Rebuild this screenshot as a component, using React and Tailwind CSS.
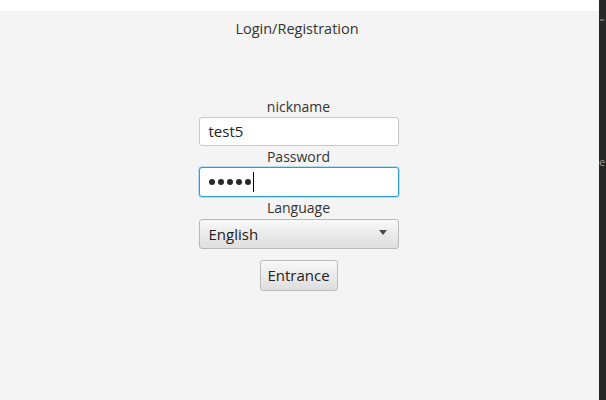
import React from "react";

const LoginWindow = () => {
  return (
    <div className="w-[606px] h-[400px] flex overflow-hidden font-['Open_Sans',sans-serif] text-[#333]">
      <div className="flex-1 flex flex-col">
        {/* window top */}
        <div className="h-[11px] bg-white" />

        <div className="flex-1 bg-[#f4f4f4] pr-[2px] flex flex-col items-center">
          <div className="mt-[7px] mr-[3px] h-[21px] leading-[21px] text-[14.5px] text-[#333]">
            Login/Registration
          </div>

          <div className="mt-[57px] w-[200px] flex flex-col items-center">
            <div className="h-[21px] leading-[21px] text-[14px]">nickname</div>
            <div className="w-full h-[29px] bg-white border border-[#c8c8c8] rounded-[3px] px-[9px] flex items-center text-[15px] text-[#222]">
              test5
            </div>

            <div className="h-[21px] leading-[21px] text-[14px]">Password</div>
            <div className="w-full h-[30px] bg-white border border-[#2f9bd0] rounded-[3px] shadow-[0_0_0_1px_#b6dff2] pl-[9px] flex items-center">
              <div className="flex gap-[3px]">
                {[1, 2, 3, 4, 5].map((d) => (
                  <span key={d} className="w-[6px] h-[6px] rounded-full bg-[#2a2a2a]" />
                ))}
              </div>
              <span className="ml-[2px] w-[1px] h-[20px] bg-black" />
            </div>

            <div className="h-[22px] leading-[22px] text-[14px]">Language</div>
            <div className="w-full h-[30px] border border-[#b9b9b9] rounded-[3px] bg-gradient-to-b from-[#f8f8f8] to-[#dedede] pl-[9px] pr-[11px] flex items-center justify-between text-[15px] text-[#222]">
              <span>English</span>
              <svg width="8" height="5" viewBox="0 0 8 5" className="-mt-[3px]">
                <path d="M0 0h8L4 5z" fill="#4a4a4a" />
              </svg>
            </div>

            <button className="mt-[11px] w-[78px] h-[31px] border border-[#bdbdbd] rounded-[3px] bg-gradient-to-b from-[#f8f8f8] to-[#dedede] text-[15px] text-[#222]">
              Entrance
            </button>
          </div>
        </div>
      </div>

      {/* editor edge behind the window */}
      <div className="w-[7px] bg-[#262626] flex flex-col items-start">
        <div className="mt-[19px] ml-[1px] w-[4px] h-[2px] bg-[#666]" />
        <div className="mt-[135px] text-[11px] leading-none text-[#9a9a9a]">e</div>
      </div>
    </div>
  );
};

export default function App() {
  return <LoginWindow />;
}
